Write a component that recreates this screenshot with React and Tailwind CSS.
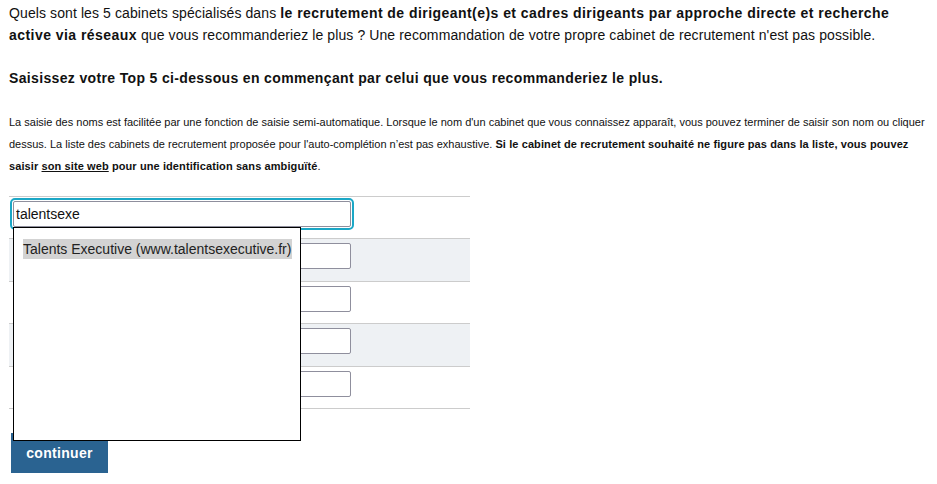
import React from 'react';

const rows = [
  { bg: 'bg-white', h: 'h-[42px]', value: 'talentsexe', focused: true },
  { bg: 'bg-[#eef1f4]', h: 'h-[43px]', value: '' },
  { bg: 'bg-white', h: 'h-[42px]', value: '' },
  { bg: 'bg-[#eef1f4]', h: 'h-[43px]', value: '' },
  { bg: 'bg-white', h: 'h-[42px]', value: '' },
];

const App = () => {
  return (
    <div className="w-[937px] h-[484px] bg-white text-[#111] font-['Liberation_Sans',Arial,sans-serif] pl-[9px] pt-[2px] overflow-hidden">
      {/* Question */}
      <p className="text-[14px] leading-[22px] w-[900px] tracking-[0.1px]">
        Quels sont les 5 cabinets spécialisés dans{' '}
        <b className="tracking-[0.45px]">le recrutement de dirigeant(e)s et cadres dirigeants par approche directe et recherche active via réseaux</b>{' '}
        que vous recommanderiez le plus ? Une recommandation de votre propre cabinet de recrutement n'est pas possible.
      </p>

      <p className="text-[14px] leading-[22px] font-bold mt-[21px] tracking-[0.35px]">
        Saisissez votre Top 5 ci-dessous en commençant par celui que vous recommanderiez le plus.
      </p>

      <p className="text-[11px] leading-[22px] mt-[22px] w-[926px]">
        La saisie des noms est facilitée par une fonction de saisie semi-automatique. Lorsque le nom d'un cabinet que vous connaissez apparaît, vous pouvez terminer de saisir son nom ou cliquer dessus. La liste des cabinets de recrutement proposée pour l'auto-complétion n’est pas exhaustive.{' '}
        <b className="tracking-[0.1px]">
          Si le cabinet de recrutement souhaité ne figure pas dans la liste, vous pouvez saisir <span className="underline">son site web</span> pour une identification sans ambiguïté
        </b>
        .
      </p>

      {/* Top 5 inputs */}
      <div className="relative mt-[19px] w-[461px] border-b border-[#cccccc]">
        {rows.map((row, i) => (
          <div key={i} className={`${row.bg} ${row.h} border-t border-[#cccccc] pl-[4px] pt-[4px]`}>
            <input
              type="text"
              readOnly
              value={row.value}
              className={`block w-[338px] h-[26px] bg-white border border-[#8f8f9d] rounded-[2px] px-[2px] text-[14px] text-[#111] ${
                row.focused ? 'outline-2 outline-solid outline-[#1ba7c6] outline-offset-[1px]' : 'outline-none'
              }`}
            />
          </div>
        ))}

        {/* Autocomplete dropdown */}
        <div className="absolute left-[4px] top-[31px] w-[288px] h-[214px] bg-white border border-black pt-[11px] pl-[9px]">
          <div className="w-fit bg-[#d3d3d3] text-[14px] leading-[20px] text-[#222] pr-[1px]">
            Talents Executive (www.talentsexecutive.fr)
          </div>
        </div>
      </div>

      <button className="block mt-[24px] ml-[2px] w-[97px] h-[40px] bg-[#2a6391] text-white font-bold text-[14px] tracking-[0.3px]">
        continuer
      </button>
    </div>
  );
};

export default App;
